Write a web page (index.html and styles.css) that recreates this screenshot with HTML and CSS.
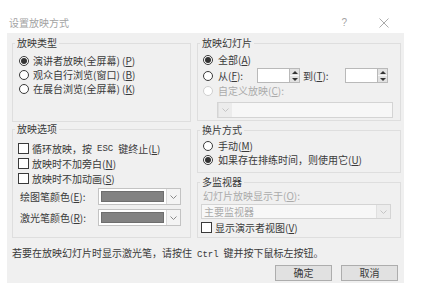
FILE: index.html
```html
<!DOCTYPE html>
<html lang="zh-CN">
<head>
  <meta charset="UTF-8">
  <title>设置放映方式</title>
  <link rel="stylesheet" href="styles.css">
</head>
<body>
  <div class="titlebar">
    <span class="title">设置放映方式</span>
    <span class="help">?</span>
    <svg class="close" width="10" height="10" viewBox="0 0 10 10"><path d="M0.5 0.5 L9.5 9.5 M9.5 0.5 L0.5 9.5" stroke="#a0a0a0" stroke-width="0.9" fill="none"/></svg>
  </div>

  <div class="panel">
    <div class="columns">
      <div class="col col-left">
        <fieldset class="group g-type">
          <legend>放映类型</legend>
          <div class="inner">
            <div class="row"><span class="radio on"></span>演讲者放映(全屏幕) (<u>P</u>)</div>
            <div class="row"><span class="radio"></span>观众自行浏览(窗口) (<u>B</u>)</div>
            <div class="row"><span class="radio"></span>在展台浏览(全屏幕) (<u>K</u>)</div>
          </div>
        </fieldset>

        <fieldset class="group g-options">
          <legend>放映选项</legend>
          <div class="inner">
            <div class="row crow"><span class="check"></span>循环放映，按<span class="mono">ESC</span>键终止(<u>L</u>)</div>
            <div class="row crow"><span class="check"></span>放映时不加旁白(<u>N</u>)</div>
            <div class="row crow"><span class="check"></span>放映时不加动画(<u>S</u>)</div>
            <div class="color-row">
              <span class="color-label">绘图笔颜色(<u>E</u>):</span>
              <div class="color-select"><span class="swatch"></span><span class="arrow"><svg width="7" height="4" viewBox="0 0 7 4"><path d="M0.5 0.5 L3.5 3.5 L6.5 0.5" stroke="#8a8a8a" fill="none"/></svg></span></div>
            </div>
            <div class="color-row">
              <span class="color-label">激光笔颜色(<u>R</u>):</span>
              <div class="color-select"><span class="swatch"></span><span class="arrow"><svg width="7" height="4" viewBox="0 0 7 4"><path d="M0.5 0.5 L3.5 3.5 L6.5 0.5" stroke="#8a8a8a" fill="none"/></svg></span></div>
            </div>
          </div>
        </fieldset>
      </div>

      <div class="col col-right">
        <fieldset class="group g-slides">
          <legend>放映幻灯片</legend>
          <div class="inner">
            <div class="row"><span class="radio on"></span>全部(<u>A</u>)</div>
            <div class="row range-row">
              <span class="radio"></span>
              <span class="from-label">从(<u>F</u>):</span>
              <div class="spin"><span class="field"></span><span class="spin-btns"><span class="up"></span><span class="down"></span></span></div>
              <span class="to-label">到(<u>T</u>):</span>
              <div class="spin"><span class="field"></span><span class="spin-btns"><span class="up"></span><span class="down"></span></span></div>
            </div>
            <div class="row disabled"><span class="radio off"></span>自定义放映(<u>C</u>):</div>
            <div class="select select-custom"><span class="arrow"><svg width="7" height="4" viewBox="0 0 7 4"><path d="M0.5 0.5 L3.5 3.5 L6.5 0.5" stroke="#c4c4c4" fill="none"/></svg></span></div>
          </div>
        </fieldset>

        <fieldset class="group g-advance">
          <legend>换片方式</legend>
          <div class="inner">
            <div class="row"><span class="radio"></span>手动(<u>M</u>)</div>
            <div class="row"><span class="radio on"></span>如果存在排练时间，则使用它(<u>U</u>)</div>
          </div>
        </fieldset>

        <fieldset class="group g-monitor">
          <legend>多监视器</legend>
          <div class="inner">
            <div class="row disabled monitor-label">幻灯片放映显示于(<u>O</u>):</div>
            <div class="select select-monitor"><span class="value">主要监视器</span><span class="arrow"><svg width="7" height="4" viewBox="0 0 7 4"><path d="M0.5 0.5 L3.5 3.5 L6.5 0.5" stroke="#c4c4c4" fill="none"/></svg></span></div>
            <div class="row presenter"><span class="check"></span>显示演示者视图(<u>V</u>)</div>
          </div>
        </fieldset>
      </div>
    </div>

    <p class="hint">若要在放映幻灯片时显示激光笔，请按住<span class="mono">Ctrl</span>键并按下鼠标左按钮。</p>

    <div class="buttons">
      <button class="btn">确定</button>
      <button class="btn">取消</button>
    </div>
  </div>
</body>
</html>
```

FILE: styles.css
```css
* {
  box-sizing: border-box;
}
body {
  margin: 0;
  width: 427px;
  height: 297px;
  background: #fff;
  font-family: "Noto Sans CJK SC", "Noto Sans", sans-serif;
  font-size: 10px;
  line-height: 12px;
  color: #3a3a3a;
  overflow: hidden;
}
u {
  text-decoration: underline;
  text-underline-offset: 1px;
}
.mono {
  font-family: "Liberation Mono", monospace;
  font-size: 9px;
  margin: 0 5px;
}

/* title bar */
.titlebar {
  height: 33px;
  padding: 12px 0 0 9px;
  display: flex;
  align-items: center;
}
.title {
  color: #a3a3a3;
  font-size: 10px;
}
.help {
  margin-left: auto;
  color: #a3a3a3;
  font-family: "Liberation Sans", sans-serif;
  font-size: 10px;
}
.close {
  margin: 0 38px 0 32px;
}

/* dialog body */
.panel {
  margin-left: 7px;
  width: 397px;
  height: 250px;
  background: #f0f0f0;
  padding: 4px 3px 0 5px;
}
.columns {
  display: flex;
  gap: 6px;
}
.col-left {
  width: 179px;
}
.col-right {
  width: 204px;
}

.group {
  margin: 0;
  padding: 0;
  border: 1px solid #dedede;
  min-width: 0;
}
.group legend {
  margin-left: 2px;
  padding: 0 2px;
  line-height: 12px;
}
.g-type { height: 85px; }
.g-options { height: 115px; margin-top: 1px; }
.g-slides { height: 84px; }
.g-advance { height: 49px; margin-top: 3px; }
.g-monitor { height: 62px; margin-top: 3px; }

.g-type .inner { padding: 5px 0 0 6px; }
.g-options .inner { padding: 6px 0 0 5px; }
.g-slides .inner { padding: 4px 0 0 5px; }
.g-advance .inner { padding: 3px 0 0 5px; }
.g-monitor .inner { padding: 1px 0 0 3px; }

.row {
  display: flex;
  align-items: center;
  height: 14px;
  white-space: pre;
}
.crow {
  height: 15px;
}
.disabled {
  color: #ababab;
}

/* radio & checkbox */
.radio {
  width: 10px;
  height: 10px;
  border: 1px solid #3a3a3a;
  border-radius: 50%;
  background: #fff;
  margin-right: 5px;
  flex: none;
  display: flex;
  align-items: center;
  justify-content: center;
}
.g-type .radio {
  margin-right: 4px;
}
.radio.on::after {
  content: "";
  width: 6px;
  height: 6px;
  border-radius: 50%;
  background: #333;
}
.radio.off {
  border-color: #cfcfcf;
}
.check {
  width: 11px;
  height: 11px;
  border: 1px solid #3a3a3a;
  background: #fff;
  margin-right: 3px;
  flex: none;
}

/* colour pickers */
.color-row {
  display: flex;
  align-items: center;
  height: 21px;
  padding-left: 2px;
}
.color-label {
  width: 78px;
  white-space: nowrap;
}
.color-select {
  width: 83px;
  height: 17px;
  border: 1px solid #c3c3c3;
  background: #fff;
  display: flex;
  padding: 2px 0 2px 2px;
}
.swatch {
  width: 63px;
  background: #828282;
  border: 1px solid #6e6e6e;
}
.color-select .arrow {
  margin-left: 2px;
  width: 14px;
  margin-top: -2px;
  margin-bottom: -2px;
  border-left: 1px solid #dadada;
  background: #f4f4f4;
}
.arrow {
  display: flex;
  align-items: center;
  justify-content: center;
}

/* slide range */
.range-row {
  height: 17px;
}
.from-label {
  width: 39px;
}
.to-label {
  width: 42px;
  margin-left: 3px;
}
.spin {
  display: flex;
  height: 15px;
}
.spin .field {
  width: 33px;
  background: #fff;
  border: 1px solid #b9b9b9;
}
.spin-btns {
  width: 10px;
  display: flex;
  flex-direction: column;
  border: 1px solid #b9b9b9;
  border-left: none;
}
.spin-btns span {
  flex: 1;
  background: #e2e2e2;
  display: flex;
  align-items: center;
  justify-content: center;
}
.spin-btns .up {
  border-bottom: 1px solid #f7f7f7;
}
.spin-btns .up::after {
  content: "";
  border: 3px solid transparent;
  border-bottom: 3px solid #333;
  border-top: none;
}
.spin-btns .down::after {
  content: "";
  border: 3px solid transparent;
  border-top: 3px solid #333;
  border-bottom: none;
}

/* disabled selects */
.select {
  display: flex;
  justify-content: space-between;
  border: 1px solid #d4d4d4;
  background: #f7f7f7;
}
.select .arrow {
  width: 14px;
  background: #ececec;
  border-left: 1px solid #e0e0e0;
}
.select-custom {
  margin: 4px 0 0 14px;
  width: 176px;
  height: 16px;
}
.select-monitor {
  width: 190px;
  height: 15px;
  margin-top: 1px;
  color: #ababab;
  padding-left: 2px;
}
.select-monitor .value {
  line-height: 13px;
}
.presenter {
  height: 15px;
  margin-top: 1px;
}
.monitor-label {
  padding-left: 2px;
}

/* footer */
.hint {
  margin: 9px 0 0 0;
  white-space: nowrap;
}
.buttons {
  display: flex;
  justify-content: flex-end;
  gap: 9px;
  margin: 4px 3px 0 0;
}
.btn {
  width: 57px;
  height: 16px;
  padding: 0;
  border: 1px solid #adadad;
  background: #e1e1e1;
  font-family: inherit;
  font-size: 10px;
  line-height: 14px;
  color: #3a3a3a;
}
```
